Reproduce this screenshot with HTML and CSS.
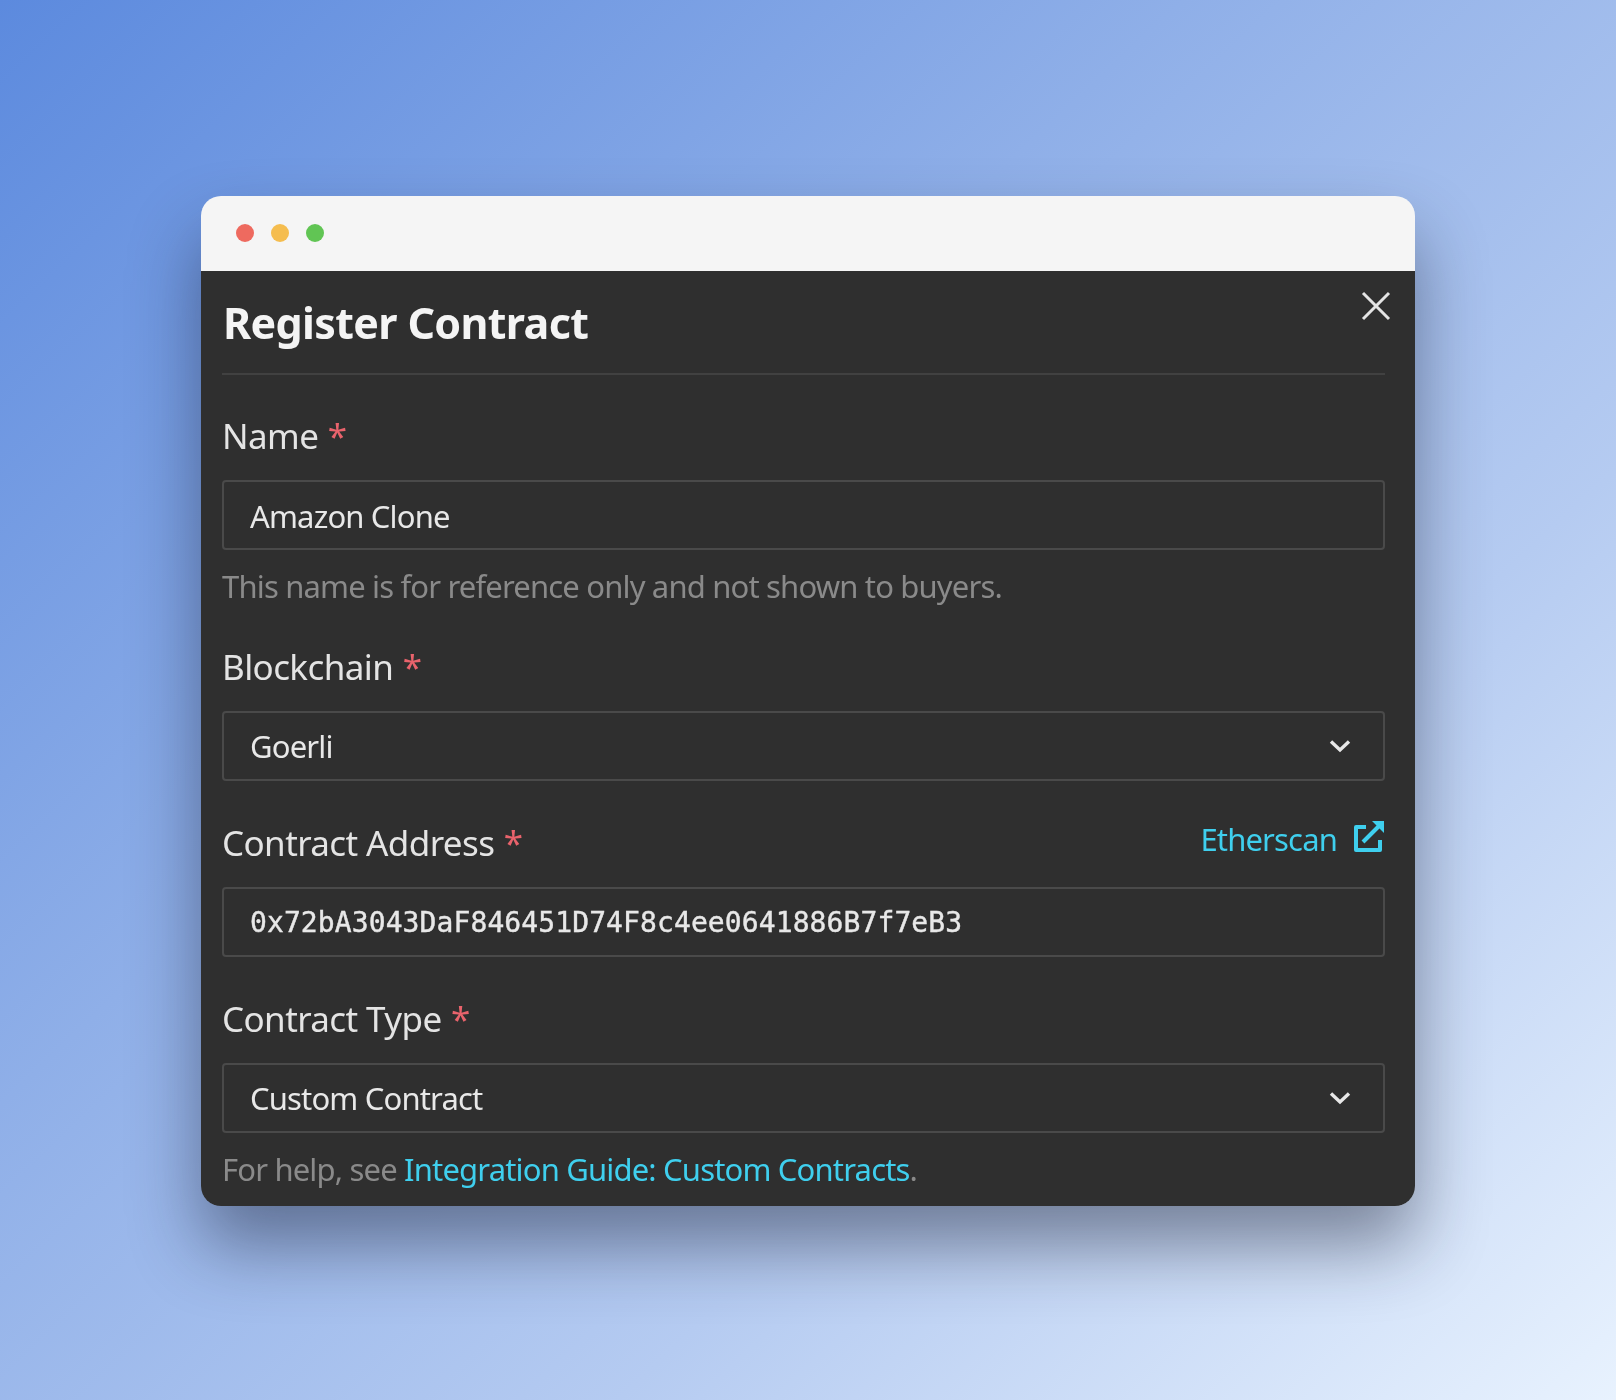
FILE: index.html
```html
<!DOCTYPE html>
<html lang="en">
<head>
    <meta charset="UTF-8">
    <title>Register Contract</title>
    <link rel="stylesheet" href="styles.css">
</head>
<body>
    <div class="window">
        <div class="titlebar">
            <span class="dot dot-red"></span>
            <span class="dot dot-yellow"></span>
            <span class="dot dot-green"></span>
        </div>
        <div class="modal">
            <svg class="close" width="30" height="30" viewBox="0 0 30 30" fill="none" stroke="#e4e4e4" stroke-width="3">
                <path d="M2 2L28 28M28 2L2 28"/>
            </svg>
            <h1>Register Contract</h1>

            <div class="field field-first">
                <div class="label-row"><label>Name <span class="req">*</span></label></div>
                <div class="control">Amazon Clone</div>
                <p class="help">This name is for reference only and not shown to buyers.</p>
            </div>

            <div class="field field-blockchain">
                <div class="label-row"><label>Blockchain <span class="req">*</span></label></div>
                <div class="control select">
                    <span>Goerli</span>
                    <svg class="chevron" width="22" height="14" viewBox="0 0 22 14" fill="none" stroke="#e8e8e8" stroke-width="3.4">
                        <path d="M2 2.5L11 11L20 2.5"/>
                    </svg>
                </div>
            </div>

            <div class="field">
                <div class="label-row">
                    <label>Contract Address <span class="req">*</span></label>
                    <a class="ext-link" href="#">Etherscan
                        <svg class="ext-icon" width="32" height="32" viewBox="0 0 32 32" fill="none" stroke="#3fcfee" stroke-width="4" stroke-linejoin="round">
                            <path d="M13 7H3V30H27V20"/>
                            <path d="M10 22L27 5"/>
                            <path d="M19 1H31V13Z" stroke="none" fill="#3fcfee"/>
                        </svg>
                    </a>
                </div>
                <div class="control mono">0x72bA3043DaF846451D74F8c4ee0641886B7f7eB3</div>
            </div>

            <div class="field">
                <div class="label-row"><label>Contract Type <span class="req">*</span></label></div>
                <div class="control select">
                    <span>Custom Contract</span>
                    <svg class="chevron" width="22" height="14" viewBox="0 0 22 14" fill="none" stroke="#e8e8e8" stroke-width="3.4">
                        <path d="M2 2.5L11 11L20 2.5"/>
                    </svg>
                </div>
                <p class="help">For help, see <a href="#">Integration Guide: Custom Contracts</a>.</p>
            </div>
        </div>
    </div>
</body>
</html>
```

FILE: styles.css
```css
html, body {
    height: 100%;
}

body {
    margin: 0;
    min-height: 1400px;
    box-sizing: border-box;
    padding: 196px 0 0 201px;
    background: linear-gradient(137deg, #5c8ade 0%, #8fafe8 38%, #b5cbf1 68%, #e8f2fe 100%);
    font-family: "Noto Sans", sans-serif;
    overflow: hidden;
}

.window {
    width: 1214px;
    height: 1010px;
    border-radius: 20px;
    overflow: hidden;
    box-shadow: 0 40px 70px rgba(20, 25, 45, 0.45);
}

.titlebar {
    height: 75px;
    background-color: #f5f5f5;
    display: flex;
    align-items: center;
    gap: 17px;
    padding: 0 0 1px 35px;
    box-sizing: border-box;
}

.dot {
    width: 18px;
    height: 18px;
    border-radius: 50%;
}

.dot-red {
    background-color: #ee6a5f;
}

.dot-yellow {
    background-color: #f5bd4f;
}

.dot-green {
    background-color: #61c554;
}

.modal {
    position: relative;
    height: 935px;
    box-sizing: border-box;
    background-color: #2f2f2f;
    padding: 20px 30px 0 22px;
    color: #e6e6e6;
}

/* the source is an upscaled capture, so everything inside is a little soft */
.modal > * {
    filter: blur(0.6px);
}

.close {
    position: absolute;
    top: 20px;
    right: 24px;
}

h1 {
    margin: 0 0 0 -1px;
    padding-left: 1px;
    height: 82px;
    font-size: 43px;
    line-height: 64px;
    font-weight: 700;
    letter-spacing: -0.65px;
    color: #f4f4f4;
    border-bottom: 2px solid #414141;
}

.field {
    margin: 36px 0 0 -1px;
}

.field-first {
    margin-top: 35px;
}

.field-blockchain {
    margin-top: 34px;
}

.label-row {
    display: flex;
    justify-content: space-between;
    align-items: center;
    height: 50px;
    margin-bottom: 20px;
}

label {
    font-size: 35px;
    letter-spacing: -0.6px;
    color: #e4e4e4;
}

.req {
    color: #e9636c;
    margin-left: 1px;
}

.control {
    height: 70px;
    box-sizing: border-box;
    border: 2px solid #4a4a4a;
    border-radius: 4px;
    padding: 1px 26px 0;
    display: flex;
    align-items: center;
    font-size: 31px;
    letter-spacing: -0.84px;
    color: #e8e8e8;
}

.select {
    justify-content: space-between;
    padding: 0 32px 1px 26px;
}

.mono {
    font-family: "DejaVu Sans Mono", monospace;
    font-size: 28px;
    letter-spacing: 0.1px;
    -webkit-text-stroke: 0.4px #e8e8e8;
}

.help {
    margin: 15px 0 0;
    font-size: 31px;
    line-height: 42px;
    letter-spacing: -0.83px;
    color: #8a8a8a;
}

a {
    color: #3fcfee;
    text-decoration: none;
}

.ext-link {
    display: flex;
    align-items: center;
    gap: 16px;
    font-size: 31px;
    letter-spacing: -0.84px;
    margin-top: -6px;
}

.ext-icon {
    margin-top: -6px;
}
```
